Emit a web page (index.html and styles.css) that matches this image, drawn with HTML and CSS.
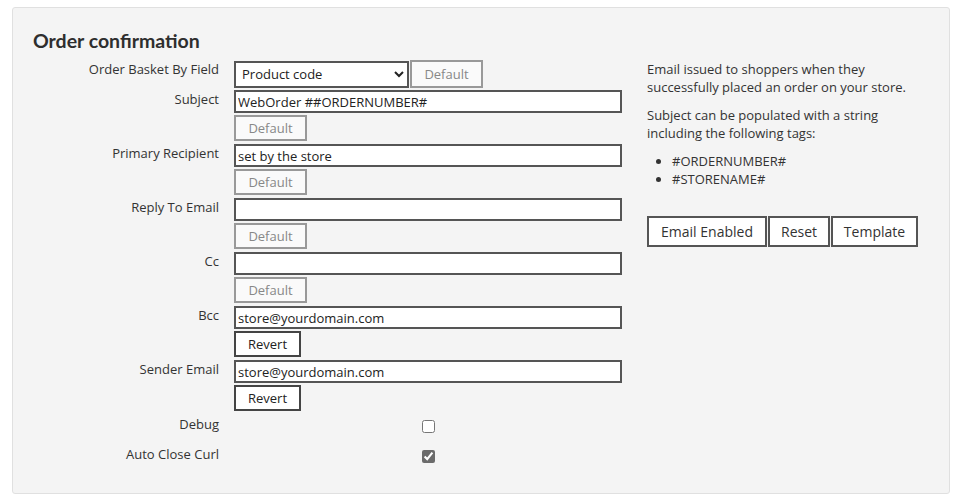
FILE: index.html
```html
<!DOCTYPE html>
<html>
<head>
<meta charset="utf-8">
<link rel="stylesheet" href="styles.css">
</head>
<body>
<div class="panel">
  <h2 class="title">Order confirmation</h2>
  <div class="layout">
    <div class="form">
      <div class="label">Order Basket By Field</div>
      <div class="field row-select">
        <select class="select"><option>Product code</option></select><button class="btn btn-default">Default</button>
      </div>

      <div class="label">Subject</div>
      <div class="field">
        <input class="input" type="text" value="WebOrder ##ORDERNUMBER#">
        <button class="btn btn-default">Default</button>
      </div>

      <div class="label">Primary Recipient</div>
      <div class="field">
        <input class="input" type="text" value="set by the store">
        <button class="btn btn-default">Default</button>
      </div>

      <div class="label">Reply To Email</div>
      <div class="field">
        <input class="input" type="text" value="">
        <button class="btn btn-default">Default</button>
      </div>

      <div class="label">Cc</div>
      <div class="field">
        <input class="input" type="text" value="">
        <button class="btn btn-default">Default</button>
      </div>

      <div class="label">Bcc</div>
      <div class="field">
        <input class="input" type="text" value="store@yourdomain.com">
        <button class="btn btn-revert">Revert</button>
      </div>

      <div class="label">Sender Email</div>
      <div class="field">
        <input class="input" type="text" value="store@yourdomain.com">
        <button class="btn btn-revert">Revert</button>
      </div>

      <div class="label label-check">Debug</div>
      <div class="field field-check"><input class="check" type="checkbox"></div>

      <div class="label label-check">Auto Close Curl</div>
      <div class="field field-check"><input class="check" type="checkbox" checked></div>
    </div>

    <div class="info">
      <p>Email issued to shoppers when they successfully placed an order on your store.</p>
      <p>Subject can be populated with a string including the following tags:</p>
      <ul>
        <li>#ORDERNUMBER#</li>
        <li>#STORENAME#</li>
      </ul>
      <div class="actions">
        <button class="abtn abtn-email">Email Enabled</button><button class="abtn abtn-reset">Reset</button><button class="abtn abtn-template">Template</button>
      </div>
    </div>
  </div>
</div>
</body>
</html>
```

FILE: styles.css
```css
* { box-sizing: border-box; }
body {
  margin: 0;
  background: #fff;
  font-family: "Open Sans", "Lato", sans-serif;
  color: #333;
}
.panel {
  margin: 7px 15px 0 12px;
  height: 487px;
  background: #f4f4f4;
  border: 1px solid #e0e0e0;
  border-radius: 3px;
  padding: 20px 20px 0 20px;
}
.title {
  margin: 0 0 6px 0;
  font-family: "Lato", sans-serif;
  font-size: 19.5px;
  font-weight: 700;
  color: #2e2e2e;
  line-height: 26px;
}
.layout {
  display: flex;
  gap: 25px;
}
.form {
  display: grid;
  grid-template-columns: 186px 388px;
  column-gap: 15px;
  row-gap: 3px;
  align-items: start;
}
.label {
  text-align: right;
  font-size: 13px;
  line-height: 18px;
  padding-top: 0;
  color: #333;
}
.field {
  display: flex;
  flex-direction: column;
  align-items: flex-start;
  gap: 2px;
}
.row-select {
  flex-direction: row;
  gap: 1px;
  align-items: center;
  margin-bottom: -1px;
}
.select {
  width: 175px;
  height: 27px;
  border: 2px solid #555;
  border-radius: 0;
  background: #fff;
  font-family: inherit;
  font-size: 13px;
  color: #222;
  padding: 0 2px;
}
.input {
  width: 388px;
  height: 23px;
  border: 2px solid #555;
  background: #fff;
  font-family: inherit;
  font-size: 13px;
  color: #222;
  padding: 0 2px;
  margin: 0;
  outline: none;
}
.btn {
  height: 26px;
  padding: 0 11px;
  font-family: inherit;
  font-size: 13px;
  margin: 0;
  border-radius: 0;
}
.btn-default {
  width: 73px;
  background: #fafafa;
  border: 2px solid #999;
  color: #888;
}
.row-select .btn-default { height: 28px; }
.btn-revert {
  width: 67px;
  background: #fff;
  border: 2px solid #444;
  color: #222;
}
.label-check { padding-top: 1px; height: 27px; }
.field-check {
  align-items: center;
  height: 27px;
}
.check {
  margin: 6px 0 0 0;
  width: 13px;
  height: 13px;
  accent-color: #6b6b6b;
}
.info {
  width: 272px;
  padding-top: 0;
  font-size: 13px;
  line-height: 18px;
  color: #333;
}
.info p { margin: 0 0 10px 0; }
.info ul {
  margin: 0;
  padding-left: 25px;
}
.actions {
  display: flex;
  gap: 1px;
  margin-top: 28px;
}
.abtn {
  height: 31px;
  border: 2px solid #555;
  background: #fff;
  font-family: inherit;
  font-size: 14px;
  color: #333;
  padding: 0;
  border-radius: 0;
  white-space: nowrap;
}
.abtn-email { width: 120px; }
.abtn-reset { width: 62px; }
.abtn-template { width: 87px; }
```
